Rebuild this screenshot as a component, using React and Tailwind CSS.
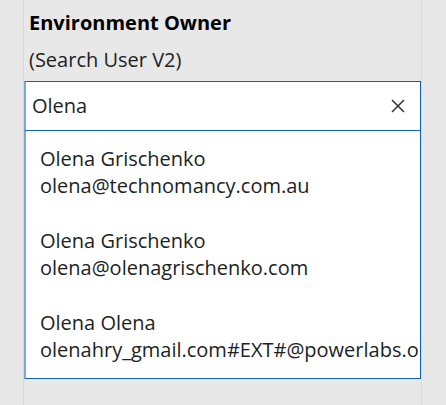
import React from 'react';

const users = [
  { name: 'Olena Grischenko', email: 'olena@technomancy.com.au' },
  { name: 'Olena Grischenko', email: 'olena@olenagrischenko.com' },
  { name: 'Olena Olena', email: 'olenahry_gmail.com#EXT#@powerlabs.onmicrosoft.com' },
];

export default function App() {
  return (
    <div
      className="w-[446px] h-[405px] bg-[#e8e8e8] overflow-hidden text-[#201f1e]"
      style={{ fontFamily: '"Open Sans", "Noto Sans", sans-serif' }}
    >
      <div className="ml-[23px] w-[399px] h-full border-x border-[#d8d8d8]">
        <div className="pl-[5px] pt-[10px] text-[20px] font-bold leading-[26px] text-black">
          Environment Owner
        </div>
        <div className="pl-[5px] pt-[11px] text-[20px] leading-[26px]">(Search User V2)</div>

        <div className="mt-[8px] w-[397px] bg-white">
          <div className="h-[50px] border border-l-2 border-[#0f62b6] border-l-[#7aa6dc] flex items-center pl-[6px] pr-[15px]">
            <span className="flex-1 text-[20px]">Olena</span>
            <svg width="14" height="14" viewBox="0 0 14 14" className="text-[#323130]">
              <path d="M1 1 L13 13 M13 1 L1 13" stroke="currentColor" strokeWidth="1.5" fill="none" />
            </svg>
          </div>
          <div className="h-[248px] border border-l-2 border-t-0 border-[#0f62b6] border-l-[#7aa6dc] overflow-hidden pt-[15px] pl-[14px]">
            {users.map((u, i) => (
              <div key={i} className="h-[82px] text-[20px] leading-[26.5px] whitespace-nowrap">
                <div>{u.name}</div>
                <div>{u.email}</div>
              </div>
            ))}
          </div>
        </div>
      </div>
    </div>
  );
}
